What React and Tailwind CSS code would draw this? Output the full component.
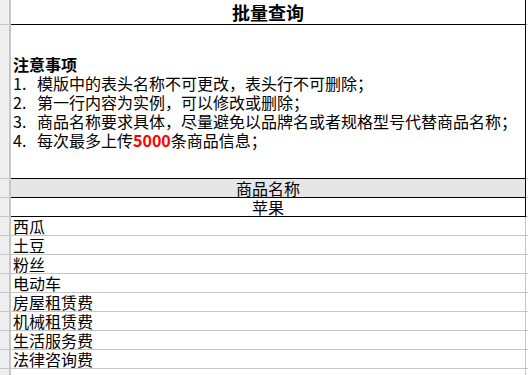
import React from "react";

const items = ["西瓜", "土豆", "粉丝", "电动车", "房屋租赁费", "机械租赁费", "生活服务费", "法律咨询费"];

const notes = [
  "模版中的表头名称不可更改，表头行不可删除；",
  "第一行内容为实例，可以修改或删除；",
  "商品名称要求具体，尽量避免以品牌名或者规格型号代替商品名称；",
];

// 左侧行号列
const RowHead = ({ line = true }) => (
  <div
    className={`w-[11px] shrink-0 bg-[#efefef] border-r-2 border-[#c6c6c6] ${
      line ? "border-b border-b-[#c6c6c6]" : ""
    }`}
  />
);

// 右侧剩余区域
const Tail = ({ line = true }) => (
  <div className={`flex-1 ${line ? "border-b border-[#c6c6c6]" : ""}`} />
);

const App = () => {
  return (
    <div
      className="w-[528px] h-[375px] overflow-hidden bg-white text-black text-[16px] leading-[19px]"
      style={{ fontFamily: '"Noto Sans CJK SC", "Liberation Sans", sans-serif' }}
    >
      {/* 标题 */}
      <div className="flex h-[25px]">
        <RowHead />
        <div className="w-[515px] shrink-0 border-b border-r border-black flex items-center justify-center">
          <span className="text-[18px] font-bold leading-[24px]">批量查询</span>
        </div>
        <Tail />
      </div>

      {/* 注意事项 */}
      <div className="flex h-[154px]">
        <RowHead />
        <div className="w-[515px] shrink-0 border-b border-r border-black pt-[30px] pl-[2px]">
          <p className="font-bold">注意事项</p>
          {notes.map((n, i) => (
            <p key={i} className="whitespace-nowrap">
              <span className="inline-block w-[24px]">{i + 1}.</span>
              {n}
            </p>
          ))}
          <p className="whitespace-nowrap">
            <span className="inline-block w-[24px]">4.</span>
            每次最多上传<span className="text-[#ff0000] font-bold">5000</span>条商品信息；
          </p>
        </div>
        <Tail />
      </div>

      {/* 表头 */}
      <div className="flex h-[19px]">
        <RowHead />
        <div className="w-[515px] shrink-0 bg-[#e6e6e6] border-b border-r border-black text-center">
          商品名称
        </div>
        <Tail />
      </div>

      {/* 示例 */}
      <div className="flex h-[19px]">
        <RowHead />
        <div className="w-[515px] shrink-0 border-b border-r border-black text-center">苹果</div>
        <Tail />
      </div>

      {items.map((item) => (
        <div key={item} className="flex h-[19px]">
          <RowHead />
          <div className="w-[515px] shrink-0 border-b border-r border-[#c6c6c6] pl-[2px]">
            {item}
          </div>
          <Tail />
        </div>
      ))}

      <div className="flex h-[10px]">
        <RowHead line={false} />
        <div className="w-[515px] shrink-0 border-r border-[#c6c6c6]" />
        <Tail line={false} />
      </div>
    </div>
  );
};

export default App;
